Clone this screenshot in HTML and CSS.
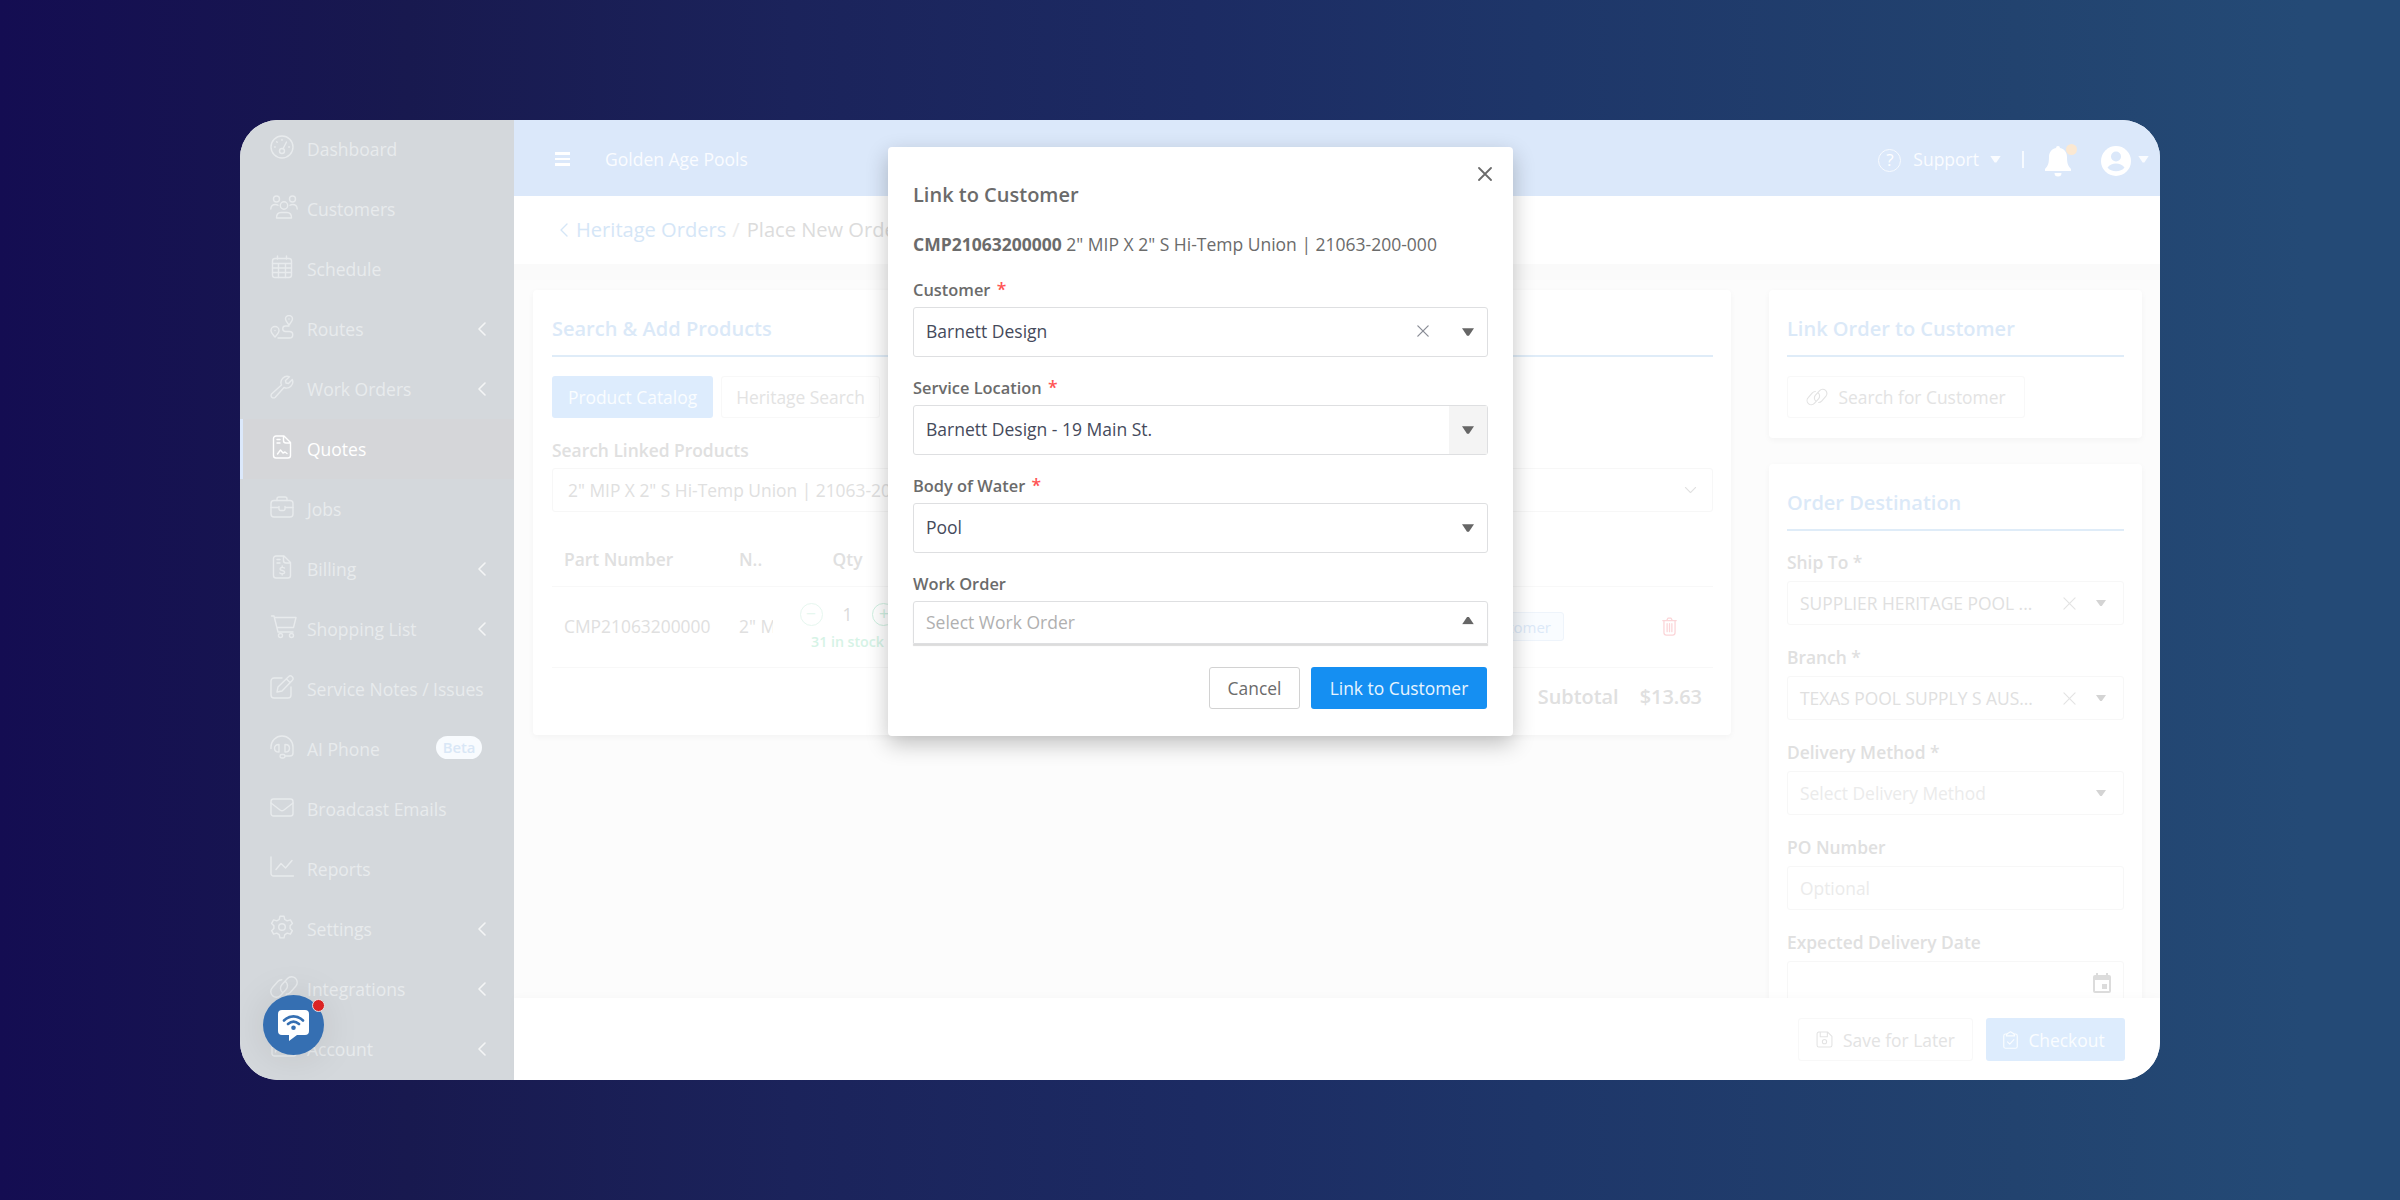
FILE: index.html
```html
<!DOCTYPE html>
<html lang="en">
<head>
    <meta charset="UTF-8">
    <meta name="viewport" content="width=device-width, initial-scale=1.0">
    <title>Place New Order</title>
    <link rel="stylesheet" href="styles.css">
</head>
<body>
    <svg class="sprite" xmlns="http://www.w3.org/2000/svg">
        <symbol id="i-dashboard" viewBox="0 0 24 24"><circle cx="12" cy="12" r="11"/><circle cx="12" cy="16" r="2.5"/><path d="M13 13.7 16.5 7M12 4.5v.8M6.7 6.7l.5.5M4.5 12h.8M18.7 12h.8"/></symbol>
        <symbol id="i-customers" viewBox="0 0 28 24"><circle cx="6.5" cy="4" r="3"/><circle cx="22.5" cy="4" r="3"/><circle cx="14" cy="10.500" r="3.700"/><path d="M.8 14c0-3 2-4.500 4.500-4.500 1 0 2 .2 2.700.8M27.200 14c0-3-2-4.500-4.500-4.500-1 0-2 .2-2.700.8M6.500 23c0-4 2-5.500 4.500-5.500h6c2.500 0 4.500 1.500 4.500 5.500z"/></symbol>
        <symbol id="i-schedule" viewBox="0 0 24 24"><rect x="2.500" y="3.500" width="19" height="19" rx="2.500"/><path d="M7.500 1v3M16.500 1v3M2.500 8.500h19M2.500 13h19M2.500 17.500h19M8.500 8.500v14M15.500 8.500v14"/></symbol>
        <symbol id="i-routes" viewBox="0 0 24 24"><path d="M19 10c-2-2.500-3.500-4-3.500-6a3.500 3.500 0 0 1 7 0c0 2-1.500 3.500-3.500 6zM5 22c-2.500-2.800-4-4.200-4-6.500a4 4 0 0 1 8 0c0 2.300-1.500 3.700-4 6.500zM19 11h-3.500a2.700 2.700 0 0 0 0 5.500h4a3 3 0 0 1 0 6.500H8"/><path d="M19 4v.1M5 15.500v.1"/></symbol>
        <symbol id="i-wrench" viewBox="0 0 24 24"><path d="M19.500 1.800a6.200 6.200 0 0 0-8 8.200L1.800 18.700a2.400 2.400 0 0 0 3.500 3.500L14 12.500a6.200 6.200 0 0 0 8.300-8L18.500 8.500l-2.500-.500-.5-2.500z"/></symbol>
        <symbol id="i-quote" viewBox="0 0 24 24"><path d="M14 1H6a2.500 2.500 0 0 0-2.500 2.500v17A2.500 2.500 0 0 0 6 23h12a2.500 2.500 0 0 0 2.500-2.500v-13zM13.500 1v4.500c0 1.500 1 2.500 2.500 2.500h4.500M7 4.500h3M7 8h3M7.500 19l3-4 2.500 3 2-1 2 1.500"/></symbol>
        <symbol id="i-jobs" viewBox="0 0 24 24"><rect x="1" y="5.500" width="22" height="16.500" rx="3"/><path d="M7 5.500V4a2 2 0 0 1 2-2h6a2 2 0 0 1 2 2v1.500M1 12.500h8M15 12.500h8M9 11.500v2.500a1.500 1.500 0 0 0 1.500 1.500h3A1.500 1.500 0 0 0 15 14v-2.500"/></symbol>
        <symbol id="i-billing" viewBox="0 0 24 24"><path d="M14 1H6a2.500 2.500 0 0 0-2.500 2.500v17A2.500 2.500 0 0 0 6 23h12a2.500 2.500 0 0 0 2.500-2.500v-13zM13.500 1v4.500c0 1.500 1 2.500 2.500 2.500h4.500M7 4.500h3M7 8h3M14.500 13c-1-.8-4.500-1-4.500.9 0 2.300 4.700 1 4.700 3.300 0 2-3.700 1.800-4.900.8M12.200 11v1.200M12.200 18.700V20"/></symbol>
        <symbol id="i-cart" viewBox="0 0 26 24"><path d="M.5 1H3l4 16h15M3.500 2.500H25L22.500 12.500H6"/><circle cx="9.500" cy="20.500" r="2"/><circle cx="20.500" cy="20.500" r="2"/></symbol>
        <symbol id="i-note" viewBox="0 0 24 24"><path d="M12 3H4a3 3 0 0 0-3 3v14a3 3 0 0 0 3 3h14a3 3 0 0 0 3-3v-8M7 17l1-5L18.500 1.700a2.500 2.500 0 0 1 3.700 3.700L12 16zM16.500 4l3.500 3.500"/></symbol>
        <symbol id="i-headset" viewBox="0 0 24 24"><path d="M1 13.500V12a11 11 0 0 1 22 0v6a3 3 0 0 1-3 3h-5M9 9.500c-3 0-4.500 1.500-4.500 3.700S6 17 9 17zM15 9.500c3 0 4.500 1.500 4.500 3.700S18 17 15 17z"/><rect x="10" y="19.500" width="5" height="3.500" rx="1.700"/></symbol>
        <symbol id="i-mail" viewBox="0 0 24 24"><rect x="1" y="4" width="22" height="17" rx="2.500"/><path d="m1 8 9 7c1.200.9 2.800.9 4 0l9-7"/></symbol>
        <symbol id="i-chart" viewBox="0 0 24 24"><path d="M1 2v16.500A2.500 2.500 0 0 0 3.500 21H23.500M6 14.500l5-6 4.500 4.500 6.500-7.500"/></symbol>
        <symbol id="i-gear" viewBox="0 0 24 24"><circle cx="12" cy="12" r="3.300"/><path d="M10 1.200h4l.8 3.300 2.400 1.400 3.200-1 2 3.500-2.300 2.300v2.700l2.300 2.300-2 3.500-3.200-1-2.400 1.400-.8 3.300h-4l-.8-3.300-2.400-1.400-3.200 1-2-3.500 2.300-2.300v-2.700L1.600 8.400l2-3.500 3.200 1 2.400-1.400z"/></symbol>
        <symbol id="i-link" viewBox="0 0 28 24"><path d="M12.500 17.500a5.500 5.500 0 0 1-.5-8l5.500-6a5.600 5.600 0 0 1 8.200 7.700l-5.500 6.300a5.500 5.500 0 0 1-4 1.800M15.500 6.500a5.500 5.500 0 0 1 .5 8l-5.500 6a5.600 5.600 0 0 1-8.200-7.700l5.500-6.300a5.500 5.500 0 0 1 4-1.800"/></symbol>
        <symbol id="i-account" viewBox="0 0 26 24"><rect x="1" y="3" width="24" height="18" rx="2.500"/><circle cx="8.500" cy="10" r="2.500"/><path d="M4.500 17c0-4 8-4 8 0M16 9h6M16 14h6"/></symbol>
        <symbol id="i-left" viewBox="0 0 8 14"><path d="M7 1 1 7l6 6"/></symbol>
        <symbol id="i-x" viewBox="0 0 14 14"><path d="m1 1 12 12M13 1 1 13"/></symbol>
        <symbol id="i-save" viewBox="0 0 24 24"><path d="M4 1.500h12.500l6 6V20a2.500 2.500 0 0 1-2.500 2.500H4A2.500 2.500 0 0 1 1.500 20V4A2.500 2.500 0 0 1 4 1.500zM6 1.500v6.500h10V1.500"/><circle cx="12" cy="15" r="3"/></symbol>
        <symbol id="i-check" viewBox="0 0 20 24"><path d="M6 4H3.500A2.500 2.500 0 0 0 1 6.500v14A2.500 2.500 0 0 0 3.500 23h13a2.500 2.500 0 0 0 2.500-2.500v-14A2.500 2.500 0 0 0 16.500 4H14M4.500 6.500 5 4l5-3 5 3 .5 2.500zM6 14.500l3 3 5.500-6"/></symbol>
        <symbol id="i-trash" viewBox="0 0 18 24"><path d="M.5 4.500h17M2 4.500V20a3 3 0 0 0 3 3h8a3 3 0 0 0 3-3V4.500M5.500 4.500l1.500-3h4l1.500 3M6 8.500v10M9 8.500v10M12 8.500v10"/></symbol>
    </svg>

    <div class="app">
        <nav class="sidebar">
            <a class="nav-item"><svg class="icon"><use href="#i-dashboard"/></svg><span>Dashboard</span></a>
            <a class="nav-item"><svg class="icon wide"><use href="#i-customers"/></svg><span>Customers</span></a>
            <a class="nav-item"><svg class="icon"><use href="#i-schedule"/></svg><span>Schedule</span></a>
            <a class="nav-item"><svg class="icon"><use href="#i-routes"/></svg><span>Routes</span><svg class="chev"><use href="#i-left"/></svg></a>
            <a class="nav-item"><svg class="icon"><use href="#i-wrench"/></svg><span>Work Orders</span><svg class="chev"><use href="#i-left"/></svg></a>
            <a class="nav-item active"><svg class="icon"><use href="#i-quote"/></svg><span>Quotes</span></a>
            <a class="nav-item"><svg class="icon"><use href="#i-jobs"/></svg><span>Jobs</span></a>
            <a class="nav-item"><svg class="icon"><use href="#i-billing"/></svg><span>Billing</span><svg class="chev"><use href="#i-left"/></svg></a>
            <a class="nav-item"><svg class="icon wide"><use href="#i-cart"/></svg><span>Shopping List</span><svg class="chev"><use href="#i-left"/></svg></a>
            <a class="nav-item"><svg class="icon"><use href="#i-note"/></svg><span>Service Notes / Issues</span></a>
            <a class="nav-item"><svg class="icon"><use href="#i-headset"/></svg><span>AI Phone</span><b class="beta">Beta</b></a>
            <a class="nav-item"><svg class="icon"><use href="#i-mail"/></svg><span>Broadcast Emails</span></a>
            <a class="nav-item"><svg class="icon"><use href="#i-chart"/></svg><span>Reports</span></a>
            <a class="nav-item"><svg class="icon"><use href="#i-gear"/></svg><span>Settings</span><svg class="chev"><use href="#i-left"/></svg></a>
            <a class="nav-item"><svg class="icon wide"><use href="#i-link"/></svg><span>Integrations</span><svg class="chev"><use href="#i-left"/></svg></a>
            <a class="nav-item"><svg class="icon wide"><use href="#i-account"/></svg><span>Account</span><svg class="chev"><use href="#i-left"/></svg></a>
        </nav>

        <div class="main">
            <header class="topbar">
                <div class="burger"><i></i><i></i><i></i></div>
                <span class="company">Golden Age Pools</span>
                <span class="help">?</span>
                <span class="support">Support</span>
                <i class="caret"></i>
                <span class="divider"></span>
                <span class="bell"><svg viewBox="0 0 26 31"><path d="M13 0a2 2 0 0 1 2 2c5 1 7 5 7 9 0 6 1 9 4 12v2H0v-2c3-3 4-6 4-12 0-4 2-8 7-9a2 2 0 0 1 2-2zM9.500 27h7a3.500 3.500 0 0 1-7 0z"/></svg><i class="dot"></i></span>
                <svg class="avatar" viewBox="0 0 30 30"><circle class="disc" cx="15" cy="15" r="15"/><circle cx="15" cy="10.500" r="5"/><path d="M6.500 21.500c4-5.500 13-5.500 17 0-3.500 5-13.500 5-17 0z"/></svg>
                <i class="caret last"></i>
            </header>
            <div class="crumbs">
                <svg class="chev"><use href="#i-left"/></svg>
                <a>Heritage Orders</a><span class="slash">/</span><span>Place New Order</span>
            </div>

            <div class="content">
                <section class="card products">
                    <h2>Search &amp; Add Products</h2>
                    <div class="tabs">
                        <button class="btn light-primary">Product Catalog</button>
                        <button class="btn light">Heritage Search</button>
                    </div>
                    <label>Search Linked Products</label>
                    <div class="faded-field search">
                        <span>2" MIP X 2" S Hi-Temp Union | 21063-200-000</span>
                        <svg class="chev down"><use href="#i-left"/></svg>
                    </div>
                    <div class="row head">
                        <b>Part Number</b><b>N..</b><b class="center">Qty</b>
                    </div>
                    <div class="row item">
                        <span>CMP21063200000</span>
                        <span class="name">2" MIP X</span>
                        <div class="qty">
                            <div class="stepper"><i class="round muted">−</i><span>1</span><i class="round">+</i></div>
                            <b>31 in stock</b>
                        </div>
                        <span class="chip">Link to Customer</span>
                        <svg class="trash"><use href="#i-trash"/></svg>
                    </div>
                    <div class="subtotal"><b>Subtotal</b><b>$13.63</b></div>
                </section>

                <div class="side">
                    <section class="card link-card">
                        <h2>Link Order to Customer</h2>
                        <button class="btn light"><svg class="btn-icon link"><use href="#i-link"/></svg>Search for Customer</button>
                    </section>
                    <section class="card">
                        <h2>Order Destination</h2>
                        <label>Ship To *</label>
                        <div class="faded-field"><span>SUPPLIER HERITAGE POOL ...</span><svg class="clear"><use href="#i-x"/></svg><i class="caret"></i></div>
                        <label>Branch *</label>
                        <div class="faded-field"><span>TEXAS POOL SUPPLY S AUS...</span><svg class="clear"><use href="#i-x"/></svg><i class="caret"></i></div>
                        <label>Delivery Method *</label>
                        <div class="faded-field hint"><span>Select Delivery Method</span><i class="caret"></i></div>
                        <label>PO Number</label>
                        <div class="faded-field hint"><span>Optional</span></div>
                        <label>Expected Delivery Date</label>
                        <div class="faded-field"><span></span><svg class="calendar" viewBox="0 0 18 20"><path d="M2 2h1V0h2v2h8V0h2v2h1a2 2 0 0 1 2 2v14a2 2 0 0 1-2 2H2a2 2 0 0 1-2-2V4a2 2 0 0 1 2-2zm0 5v11h14V7zm7 4h5v5H9z" fill-rule="evenodd"/></svg></div>
                    </section>
                </div>
            </div>

            <footer class="actions">
                <button class="btn light"><svg class="btn-icon"><use href="#i-save"/></svg>Save for Later</button>
                <button class="btn light-primary"><svg class="btn-icon check"><use href="#i-check"/></svg>Checkout</button>
            </footer>
        </div>

        <div class="modal">
            <svg class="close"><use href="#i-x"/></svg>
            <h3>Link to Customer</h3>
            <p><b>CMP21063200000</b> 2" MIP X 2" S Hi-Temp Union | 21063-200-000</p>
            <label>Customer <em>*</em></label>
            <div class="select"><span>Barnett Design</span><svg class="clear"><use href="#i-x"/></svg><div class="arrow"><i class="caret"></i></div></div>
            <label>Service Location <em>*</em></label>
            <div class="select hovered"><span>Barnett Design - 19 Main St.</span><div class="arrow"><i class="caret"></i></div></div>
            <label>Body of Water <em>*</em></label>
            <div class="select"><span>Pool</span><div class="arrow"><i class="caret"></i></div></div>
            <label>Work Order</label>
            <div class="select open"><span>Select Work Order</span><div class="arrow"><i class="caret up"></i></div></div>
            <div class="modal-actions">
                <button class="btn cancel">Cancel</button>
                <button class="btn primary">Link to Customer</button>
            </div>
        </div>

        <div class="chat">
            <svg viewBox="0 0 31 31"><path class="bubble" d="M4 0h23a4 4 0 0 1 4 4v17a4 4 0 0 1-4 4h-8l-8 6v-6H4a4 4 0 0 1-4-4V4a4 4 0 0 1 4-4z"/><path class="wave" d="M6 10.500c5.500-5.500 13.500-5.500 19 0M10 14c3.500-3 7.500-3 11 0"/><circle cx="15.500" cy="17.800" r="2.300"/></svg>
            <i class="dot"></i>
        </div>
    </div>
</body>
</html>
```

FILE: styles.css
```css
* {
    box-sizing: border-box;
}
body {
    margin: 0;
    height: 1200px;
    padding: 120px 240px;
    overflow: hidden;
    background: linear-gradient(90deg, #140d52 0%, #18194f 17%, #1b235b 33%, #1c2b63 50%, #1e3669 64%, #22436f 84%, #244a76 96%);
    font-family: 'Open Sans', 'Noto Sans', sans-serif;
    font-size: 17.5px;
    line-height: 24px;
}
.sprite {
    position: absolute;
    width: 0;
    height: 0;
}
svg {
    fill: none;
    stroke: currentColor;
    stroke-linecap: round;
    stroke-linejoin: round;
    flex: none;
}
b, h2, h3, label {
    font-weight: 600;
}
h2, h3, p {
    margin: 0;
}
.app {
    position: relative;
    display: flex;
    width: 1920px;
    height: 960px;
    border-radius: 38px;
    overflow: hidden;
    background: #fcfcfc;
}

/* sidebar */
.sidebar {
    flex: none;
    width: 274px;
    margin-top: -1px;
    background: #d4d8dc;
    color: #e8ebed;
}
.nav-item {
    display: flex;
    align-items: center;
    height: 60px;
    padding: 0 28px 0 27px;
    border-left: 3px solid transparent;
}
.nav-item span {
    white-space: nowrap;
}
.nav-item .icon {
    width: 24px;
    height: 24px;
    margin: 0 13px 4px 0;
    stroke-width: 1.4;
}
.nav-item .icon.wide {
    width: 28px;
    margin-right: 9px;
}
.nav-item.active {
    color: #fff;
    background: #d5d6d9;
    border-left-color: #dbe8fb;
}
.chev {
    width: 8px;
    height: 14px;
    stroke-width: 1.4;
}
.nav-item .chev {
    margin-left: auto;
    color: #f4f5f6;
    stroke-width: 1.6;
}
.beta {
    margin: -3px 4px 0 auto;
    width: 46px;
    height: 23px;
    border-radius: 12px;
    background: #f8fbfe;
    color: #d9e7f6;
    font-size: 14.8px;
    line-height: 22px;
    text-align: center;
}

/* top bar */
.main {
    flex: 1;
    display: flex;
    flex-direction: column;
    min-width: 0;
}
.topbar {
    flex: none;
    display: flex;
    align-items: center;
    height: 76px;
    padding: 2px 11px 0 41px;
    background: #dbe8fa;
    color: #fafcff;
}
.burger {
    display: grid;
    gap: 3px;
    width: 15px;
    margin-right: 35px;
}
.burger i {
    height: 2.5px;
    background: #fff;
}
.company {
    margin-right: auto;
}
.help {
    width: 23px;
    height: 23px;
    margin: 3px 12px 0 0;
    border: 1.5px solid #f8fbff;
    border-radius: 50%;
    color: #fff;
    font-size: 17px;
    line-height: 20px;
    text-align: center;
}
.support {
    margin-right: 11px;
}
.caret {
    flex: none;
    width: 11px;
    height: 7px;
    background: currentColor;
    clip-path: polygon(0 0, 100% 0, 58% 100%, 42% 100%);
}
.caret.up {
    transform: rotate(180deg);
}
.divider {
    width: 2px;
    height: 17px;
    margin: 0 21px 0 21px;
    background: #f6faff;
}
.bell {
    position: relative;
    width: 26px;
    height: 31px;
    margin: 5px 30px 0 0;
}
.bell svg {
    width: 26px;
    height: 31px;
    fill: #fff;
    stroke: none;
}
.bell .dot {
    position: absolute;
    top: -2px;
    right: -6px;
    width: 11px;
    height: 11px;
    border-radius: 50%;
    background: #fbe8d2;
}
.avatar {
    width: 30px;
    height: 30px;
    margin: 4px 7px 0 0;
    fill: #dbe8fa;
    stroke: none;
}
.avatar .disc {
    fill: #fff;
}

/* breadcrumbs */
.crumbs {
    flex: none;
    display: flex;
    align-items: center;
    height: 68px;
    padding-left: 46px;
    background: #fff;
    color: #dcdcdc;
    font-size: 20.1px;
}
.crumbs a {
    margin-left: 8px;
    color: #d5e6f7;
}
.crumbs .chev {
    color: #d5e6f7;
}
.crumbs .slash {
    margin: 0 7px 0 6px;
    color: #ebebeb;
}

/* page content */
.content {
    flex: 1;
    display: flex;
    align-items: flex-start;
    gap: 38px;
    min-height: 0;
    padding: 26px 18px 0 19px;
    overflow: hidden;
    background: linear-gradient(#fafafa 16px, #fcfcfc 16px);
}
.card {
    padding: 24px 18px 0;
    border-radius: 4px;
    background: #fff;
    box-shadow: 0 2px 6px rgba(0, 0, 0, 0.04);
    color: #e0e0e0;
}
.card h2 {
    height: 43px;
    margin-bottom: 19px;
    border-bottom: 2px solid #dfecf8;
    color: #dbe9f8;
    font-size: 20px;
    line-height: 29px;
}
.card label {
    display: block;
    font-size: 17.4px;
}
.products {
    width: 1198px;
    height: 445px;
    padding-left: 19px;
}
.side {
    width: 373px;
}
.link-card {
    height: 148px;
    margin-bottom: 26px;
}
.side .card:last-child {
    height: 700px;
}
.side .card:last-child label {
    margin-bottom: 7px;
}
.btn {
    display: inline-flex;
    align-items: center;
    justify-content: center;
    height: 42px;
    padding: 0 15px;
    border: 1px solid transparent;
    border-radius: 3px;
    font-family: inherit;
    font-size: 17.4px;
    line-height: 24px;
    white-space: nowrap;
}
.btn.light {
    border-color: #f8f8f8;
    background: #fff;
    color: #e3e3e3;
}
.btn.light-primary {
    background: #ddecfd;
    color: #fafdff;
}
.tabs {
    display: flex;
    gap: 8px;
    margin-bottom: 20px;
}
.tabs .btn:first-child {
    width: 161px;
}
.tabs .btn:last-child {
    width: 159px;
}
.faded-field {
    display: flex;
    align-items: center;
    height: 44px;
    margin-bottom: 20px;
    padding: 0 17px 0 12px;
    border: 1px solid #f7f7f7;
    border-radius: 3px;
}
.faded-field span {
    margin-right: auto;
    font-size: 17.4px;
    white-space: nowrap;
}
.faded-field.hint span {
    color: #ebebeb;
}
.faded-field .clear {
    width: 13px;
    height: 13px;
    margin-right: 20px;
    color: #e4e4e4;
    stroke-width: 1.3;
}
.faded-field .caret {
    width: 10px;
    height: 6px;
    background: #d4d4d4;
}
.faded-field.search {
    margin: 6px 0 21px;
    padding: 0 18px 0 15px;
}
.chev.down {
    transform: rotate(-90deg);
}
.faded-field.search .chev {
    width: 7px;
    height: 12px;
}
.calendar {
    width: 18px;
    height: 20px;
    margin-right: -5px;
    fill: #dcdcdc;
    stroke: none;
}

/* parts table */
.row {
    display: grid;
    grid-template-columns: 175px 34px 149px 1fr 20px;
    align-items: center;
    padding: 0 31px 0 12px;
    border-bottom: 1px solid #f8f8f8;
}
.row.head {
    height: 54px;
    padding-bottom: 2px;
    font-size: 17.4px;
}
.row.item {
    height: 81px;
    padding-bottom: 2px;
    font-size: 17.4px;
}
.row .center {
    text-align: center;
}
.row .name {
    overflow: hidden;
    white-space: nowrap;
}
.qty {
    color: #d6f3e6;
    font-size: 14.2px;
    text-align: center;
}
.stepper {
    display: flex;
    align-items: center;
    justify-content: center;
    gap: 20px;
    height: 31px;
    color: #dadada;
    font-size: 17.4px;
}
.round {
    width: 23px;
    height: 23px;
    border: 1.5px solid #cff0e1;
    border-radius: 50%;
    color: #cff0e1;
    font-style: normal;
    line-height: 19px;
    text-align: center;
}
.round.muted {
    opacity: 0.5;
}
.chip {
    justify-self: end;
    height: 29px;
    margin-right: 98px;
    padding: 0 12px;
    border: 1px solid #eef4fb;
    border-radius: 3px;
    background: #f9fcff;
    color: #dce9f8;
    font-size: 15px;
    line-height: 28px;
}
.trash {
    width: 15px;
    height: 19px;
    color: #fbd5d8;
    stroke-width: 1.6;
}
.subtotal {
    display: flex;
    justify-content: flex-end;
    gap: 21px;
    padding: 17px 11px 0 0;
    font-size: 19.9px;
}

/* footer */
.actions {
    flex: none;
    display: flex;
    justify-content: flex-end;
    gap: 13px;
    height: 82px;
    padding: 20px 35px 0 0;
    background: #fff;
    box-shadow: 0 -2px 8px rgba(0, 0, 0, 0.02);
}
.actions .btn {
    width: 175px;
    height: 43px;
}
.actions .btn:last-child {
    width: 139px;
    padding-right: 18px;
}
.btn-icon {
    width: 17px;
    height: 17px;
    margin-right: 10px;
    stroke-width: 1.5;
}
.btn-icon.link {
    width: 22px;
    height: 18px;
}
.btn-icon.check {
    width: 15px;
    height: 18px;
}
.link-card .btn {
    width: 238px;
}

/* link modal */
.modal {
    position: absolute;
    top: 27px;
    left: 648px;
    width: 625px;
    height: 589px;
    padding: 34px 25px 0;
    border-radius: 4px;
    background: #fff;
    box-shadow: 0 8px 22px rgba(0, 0, 0, 0.24);
    color: #6b6b6b;
}
.modal .close {
    position: absolute;
    top: 20px;
    right: 21px;
    width: 14px;
    height: 14px;
    stroke-width: 1.8;
}
.modal h3 {
    margin-bottom: 23px;
    font-size: 20px;
    line-height: 28px;
}
.modal p {
    margin-bottom: 22px;
    white-space: nowrap;
}
.modal p b {
    font-weight: 700;
}
.modal label {
    display: block;
    height: 24px;
    margin-bottom: 5px;
    font-size: 16.4px;
}
.modal em {
    margin-left: 2px;
    color: #f55;
    font-style: normal;
    font-size: 17.5px;
    line-height: 20px;
}
.select {
    display: flex;
    align-items: center;
    height: 50px;
    margin-bottom: 19px;
    padding: 0 0 2px 12px;
    border: 1px solid #dedfe1;
    border-radius: 3px;
    color: #454a5b;
}
.select span {
    margin-right: auto;
}
.select .clear {
    width: 12px;
    height: 12px;
    margin-right: 20px;
    color: #8a8d96;
    stroke-width: 1.5;
}
.select .arrow {
    display: flex;
    align-items: center;
    justify-content: center;
    align-self: stretch;
    width: 38px;
    margin-bottom: -2px;
    color: #666;
}
.select .caret {
    width: 12px;
    height: 7.5px;
}
.select.hovered .arrow {
    background: #f4f4f4;
}
.select.open {
    height: 43px;
    margin-bottom: 23px;
    color: #b0b0b0;
    border-radius: 3px 3px 0 0;
    box-shadow: 0 2px 1px #dcdcdc;
}
.select.open .arrow {
    padding-bottom: 3px;
}
.modal-actions {
    display: flex;
    justify-content: flex-end;
    gap: 11px;
    padding-right: 1px;
}
.btn.cancel {
    width: 91px;
    border-color: #d2d2d2;
    background: #fff;
    color: #6b6b6b;
}
.btn.primary {
    width: 176px;
    background: #158ff2;
    color: #e8f5ff;
}

/* chat bubble */
.chat {
    position: absolute;
    left: 23px;
    bottom: 25px;
    display: flex;
    justify-content: center;
    width: 61px;
    height: 60px;
    padding-top: 15px;
    border-radius: 50%;
    background: #356fb2;
    box-shadow: 0 2px 40px rgba(0, 0, 0, 0.1);
}
.chat svg {
    width: 31px;
    height: 31px;
    stroke: none;
    fill: #356fb2;
}
.chat .bubble {
    fill: #fff;
}
.chat .wave {
    fill: none;
    stroke: #356fb2;
    stroke-width: 2.6;
}
.chat .dot {
    position: absolute;
    top: 4px;
    right: -1px;
    width: 13px;
    height: 13px;
    border: 1.5px solid #e6e3e6;
    border-radius: 50%;
    background: #dc2323;
}
```
